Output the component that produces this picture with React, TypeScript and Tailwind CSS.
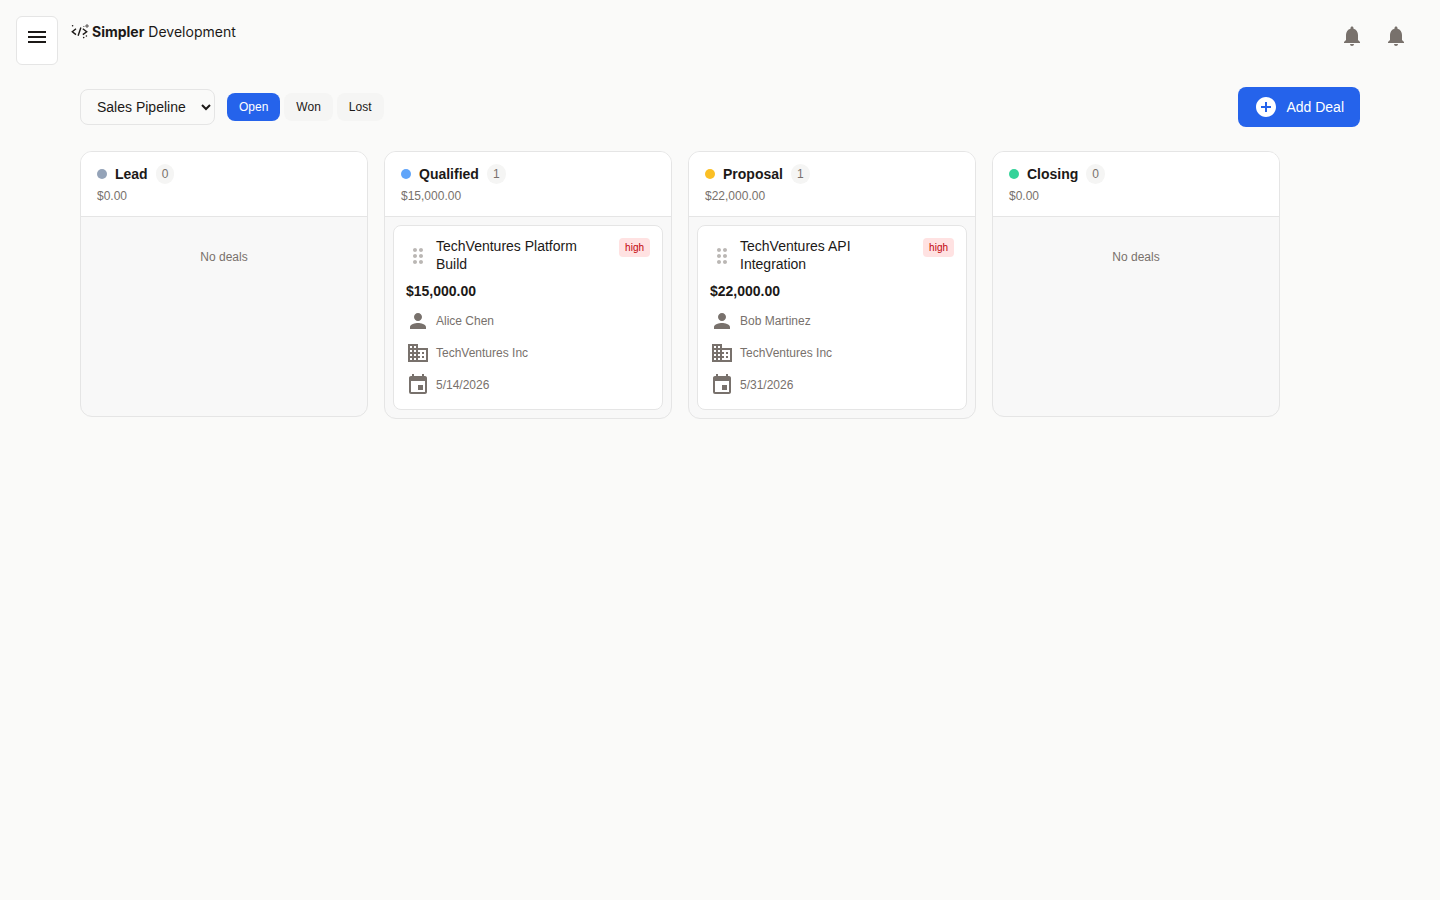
import {
  MdAddCircle,
  MdBusiness,
  MdDragIndicator,
  MdEvent,
  MdMenu,
  MdNotifications,
  MdPerson,
} from "react-icons/md"

interface Deal {
  title: string
  value: string
  priority: string
  contact: string
  company: string
  closeDate: string
}

interface Stage {
  name: string
  dot: string
  total: string
  deals: Deal[]
}

const stages: Stage[] = [
  { name: "Lead", dot: "bg-[#94a3b8]", total: "$0.00", deals: [] },
  {
    name: "Qualified",
    dot: "bg-[#60a5fa]",
    total: "$15,000.00",
    deals: [
      {
        title: "TechVentures Platform Build",
        value: "$15,000.00",
        priority: "high",
        contact: "Alice Chen",
        company: "TechVentures Inc",
        closeDate: "5/14/2026",
      },
    ],
  },
  {
    name: "Proposal",
    dot: "bg-[#fbbf24]",
    total: "$22,000.00",
    deals: [
      {
        title: "TechVentures API Integration",
        value: "$22,000.00",
        priority: "high",
        contact: "Bob Martinez",
        company: "TechVentures Inc",
        closeDate: "5/31/2026",
      },
    ],
  },
  { name: "Closing", dot: "bg-[#34d399]", total: "$0.00", deals: [] },
]

function Logo() {
  return (
    <div className="flex items-center gap-[3px] font-['Inter',sans-serif] text-sm leading-5">
      <svg width="18" height="18" viewBox="0 0 18 18" fill="none" stroke="currentColor" strokeWidth="1.4">
        <path d="M5 5.8 1.3 8.7 5 11.6M9.9 4.6 7.1 12.8M11.8 5.8l3.9 2.9-3.9 2.9" />
        <path d="M16 1v4M14 3h4" strokeWidth="0.7" />
        <g fill="currentColor" stroke="none">
          <circle cx="1.6" cy="2.7" r="0.8" />
          <circle cx="12.7" cy="14.6" r="0.8" />
          <circle cx="15.4" cy="13" r="0.8" />
          <circle cx="12.9" cy="3.6" r="0.5" />
        </g>
      </svg>
      <span>
        <span className="font-bold">Simpler</span> Development
      </span>
    </div>
  )
}

function DealCard({ deal }: { deal: Deal }) {
  return (
    <div className="rounded-lg border border-[#e5e5e5] bg-white p-3">
      <div className="flex items-start gap-2">
        <div className="flex flex-1 items-start gap-1.5">
          <MdDragIndicator className="mt-1.5 size-6 shrink-0 text-[#78716c] opacity-50" />
          <p className="text-sm leading-tight">{deal.title}</p>
        </div>
        <span className="rounded bg-red-100 px-1.5 py-0.5 text-[10px] leading-[15px] text-red-700">
          {deal.priority}
        </span>
      </div>
      <p className="mt-2 text-sm font-bold">{deal.value}</p>
      <div className="mt-2 flex flex-col gap-2 text-xs text-[#78716c]">
        <div className="flex items-center gap-1.5">
          <MdPerson className="size-6" />
          <span>{deal.contact}</span>
        </div>
        <div className="flex items-center gap-1.5">
          <MdBusiness className="size-6" />
          <span>{deal.company}</span>
        </div>
        <div className="flex items-center gap-1.5">
          <MdEvent className="size-6" />
          <span>{deal.closeDate}</span>
        </div>
      </div>
    </div>
  )
}

function StageColumn({ stage }: { stage: Stage }) {
  return (
    <section className="w-72 shrink-0 overflow-hidden rounded-xl border border-[#e5e5e5] bg-[#f8f8f8]">
      <div className="border-b border-[#e5e5e5] bg-white px-4 py-3">
        <div className="flex h-5 items-center gap-2">
          <span className={`size-2.5 rounded-full ${stage.dot}`} />
          <h3 className="text-sm font-bold">{stage.name}</h3>
          <span className="rounded-full bg-[#f5f5f4] px-1.5 py-0.5 text-xs text-[#78716c]">{stage.deals.length}</span>
        </div>
        <p className="mt-1 text-xs text-[#78716c]">{stage.total}</p>
      </div>
      <div className="min-h-[199px] p-2">
        {stage.deals.map((deal) => (
          <DealCard key={deal.title} deal={deal} />
        ))}
        {stage.deals.length === 0 && <p className="py-6 text-center text-xs text-[#78716c]">No deals</p>}
      </div>
    </section>
  )
}

export default function App() {
  return (
    <div className="min-h-screen bg-[#fafaf9] font-['Liberation_Sans',sans-serif] text-[#1c1917]">
      <header className="flex items-start justify-between pt-4 pr-8 pl-4">
        <div className="flex items-start gap-[13px]">
          <button className="flex h-[49px] items-start rounded-md border border-[#e5e5e5] bg-white p-2">
            <MdMenu className="size-6" />
          </button>
          <div className="pt-1.5">
            <Logo />
          </div>
        </div>
        <div className="flex gap-5 pt-2 text-[#78716c]">
          <MdNotifications className="size-6" />
          <MdNotifications className="size-6" />
        </div>
      </header>

      <main className="px-20 pt-[22px]">
        <div className="flex items-center justify-between">
          <div className="flex items-center gap-3">
            <select className="h-9 w-[135px] rounded-lg border border-[#e5e5e5] bg-[#fafaf9] px-3 text-sm">
              <option>Sales Pipeline</option>
            </select>
            <div className="flex gap-1 text-xs">
              <button className="rounded-lg bg-[#2563eb] px-3 py-1.5 text-white">Open</button>
              <button className="rounded-lg bg-[#f5f5f4] px-3 py-1.5">Won</button>
              <button className="rounded-lg bg-[#f5f5f4] px-3 py-1.5">Lost</button>
            </div>
          </div>
          <button className="flex h-10 items-center gap-2 rounded-lg bg-[#2563eb] px-4 text-sm text-white">
            <MdAddCircle className="size-6" />
            Add Deal
          </button>
        </div>

        <div className="mt-6 flex items-start gap-4">
          {stages.map((stage) => (
            <StageColumn key={stage.name} stage={stage} />
          ))}
        </div>
      </main>
    </div>
  )
}
